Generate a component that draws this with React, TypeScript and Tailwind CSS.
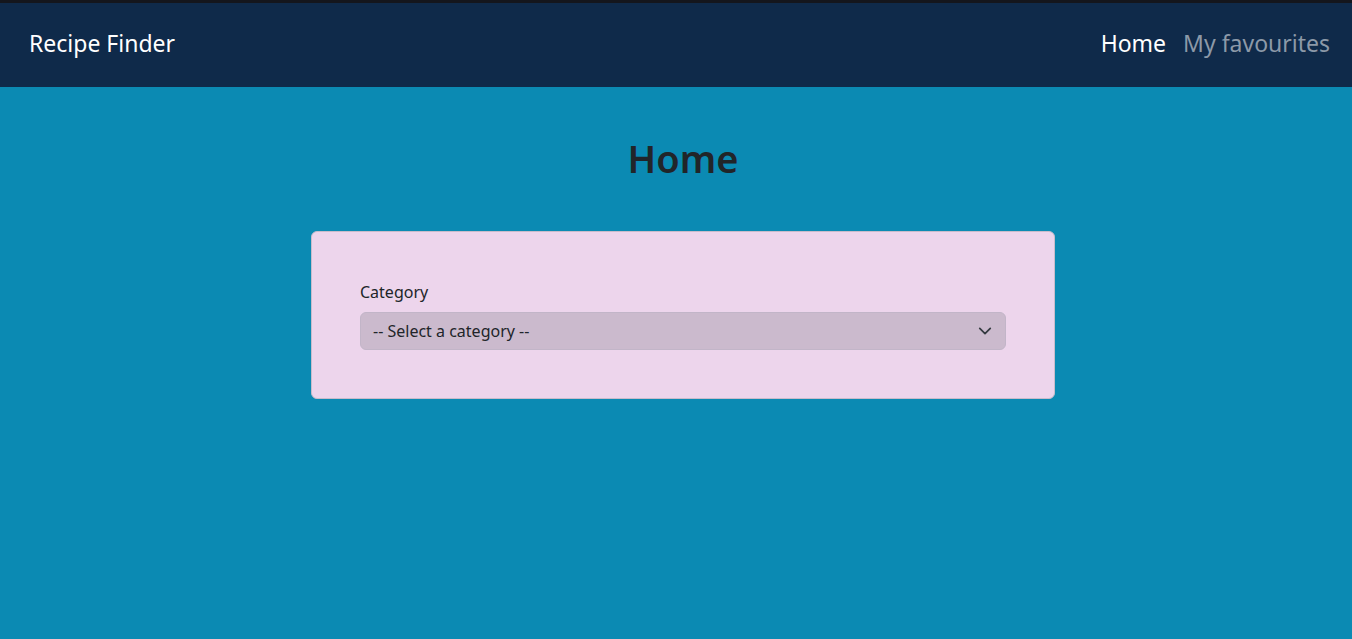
export default function App() {
  return (
    <div className="min-h-screen bg-[#0b8ab3] font-['Noto_Sans',sans-serif] text-[#212529]">
      <div className="h-[3px] bg-[#14161d]" />
      <nav className="flex h-[84px] items-center justify-between bg-[#0f2a4a] px-[29px] pb-[3px] pr-[22px]">
        <a href="#" className="text-[23px] text-white">
          Recipe Finder
        </a>
        <ul className="flex items-center gap-[17px] text-[23px]">
          <li>
            <a href="#" className="text-white">
              Home
            </a>
          </li>
          <li>
            <a href="#" className="text-[#8c99a8]">
              My favourites
            </a>
          </li>
        </ul>
      </nav>

      <main className="flex flex-col items-center pl-[14px]">
        <h1 className="mt-[49px] text-[38px] font-semibold leading-[1.2]">Home</h1>
        <div className="mt-[49px] w-[744px] rounded-md border border-[#c9bccb] bg-[#edd5ec] px-[48px] py-[48px]">
          <label className="mb-2 block text-[16px] leading-[24px]">Category</label>
          <div className="relative">
            <select className="h-[38px] w-full appearance-none rounded-md border border-[#c2b5c8] bg-[#cbbacd] pl-3 pr-10 text-[16px] text-[#212529]">
              <option>-- Select a category --</option>
            </select>
            <svg
              className="pointer-events-none absolute right-[14px] top-1/2 -translate-y-1/2"
              width="14"
              height="14"
              viewBox="0 0 16 16"
              fill="none"
              stroke="#343a40"
              strokeWidth="2"
              strokeLinecap="round"
              strokeLinejoin="round"
            >
              <path d="m2 5 6 6 6-6" />
            </svg>
          </div>
        </div>
      </main>
    </div>
  );
}
